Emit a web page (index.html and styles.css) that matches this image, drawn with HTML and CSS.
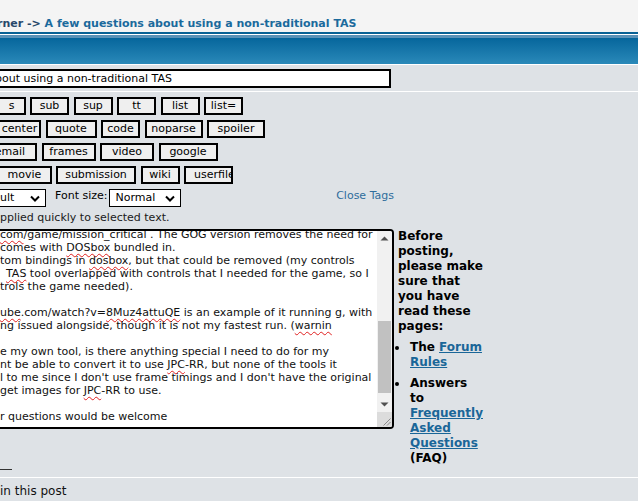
FILE: index.html
```html
<!DOCTYPE html>
<html lang="en">
<head>
<meta charset="utf-8">
<title>Post reply</title>
<link rel="stylesheet" href="styles.css">
</head>
<body>
<div class="crumbs"><span class="crumb-prev">rner -&gt;</span> <a class="crumb-link">A few questions about using a non-traditional TAS</a></div>
<div class="bar-line"></div>
<div class="catbar"></div>

<div class="row subject-row">
  <div class="subject">bout using a non-traditional TAS</div>
</div>

<div class="row editor-row">
  <div class="editor">
    <div class="tagrow">
      <span class="btn w28 first-s">s</span>
      <span class="btn w39">sub</span>
      <span class="btn w39">sup</span>
      <span class="btn w39">tt</span>
      <span class="btn w39">list</span>
      <span class="btn w39">list=</span>
    </div>
    <div class="tagrow">
      <span class="btn w43 first-center">center</span>
      <span class="btn w51">quote</span>
      <span class="btn w39">code</span>
      <span class="btn w58">noparse</span>
      <span class="btn w58">spoiler</span>
    </div>
    <div class="tagrow">
      <span class="btn w54 first-email">email</span>
      <span class="btn w54">frames</span>
      <span class="btn w54">video</span>
      <span class="btn w59">google</span>
    </div>
    <div class="tagrow">
      <span class="btn w54 first-movie">movie</span>
      <span class="btn w80">submission</span>
      <span class="btn w39">wiki</span>
      <span class="btn w49 btn-overflow">userfile</span>
    </div>

    <div class="fontrow">
      <div class="select sel-font"><span>ult</span><svg width="10" height="7" viewBox="0 0 10 7"><path d="M1 1.5 L5 5.5 L9 1.5" fill="none" stroke="#000" stroke-width="2"/></svg></div>
      <span class="label">Font size:</span>
      <div class="select sel-size"><span>Normal</span><svg width="10" height="7" viewBox="0 0 10 7"><path d="M1 1.5 L5 5.5 L9 1.5" fill="none" stroke="#000" stroke-width="2"/></svg></div>
      <a class="close-tags">Close Tags</a>
    </div>
    <div class="hint">pplied quickly to selected text.</div>

    <div class="post-area">
      <div class="textarea">
        <div class="ta-text">
          <div class="ta-lines">
            <div><span class="sp">com</span>/game/mission_critical . The GOG version removes the need for</div>
            <div>comes with <span class="sp">DOSbox</span> bundled in.</div>
            <div>tom bindings in <span class="sp">dosbox</span>, but that could be removed (my controls</div>
            <div class="ind"><span class="sp">TAS</span> tool overlapped with controls that I needed for the game, so I</div>
            <div>trols the game needed).</div>
            <div>&nbsp;</div>
            <div><span class="sp">ube</span>.com/watch?v=<span class="sp">8Muz4attuQE</span> is an example of it running g, with</div>
            <div>ng issued alongside, though it is not my fastest run. (<span class="sp">warnin</span></div>
            <div>&nbsp;</div>
            <div>e my own tool, is there anything special I need to do for my</div>
            <div>nt be able to convert it to use <span class="sp">JPC</span>-RR, but none of the tools it</div>
            <div>l to me since I don't use frame timings and I don't have the original</div>
            <div>get images for <span class="sp">JPC</span>-RR to use.</div>
            <div>&nbsp;</div>
            <div>r questions would be welcome</div>
          </div>
        </div>
        <div class="scrollbar">
          <div class="sb-btn"><svg width="15" height="15" viewBox="0 0 15 15"><path d="M3.5 9.5 L7.5 5.5 L11.5 9.5 Z" fill="#505050"/></svg></div>
          <div class="sb-track"><div class="sb-thumb"></div></div>
          <div class="sb-btn"><svg width="15" height="15" viewBox="0 0 15 15"><path d="M3.5 5.5 L7.5 9.5 L11.5 5.5 Z" fill="#505050"/></svg></div>
          <div class="sb-corner"><svg width="15" height="15" viewBox="0 0 15 15"><path d="M13.5 6.5 L6.5 13.5 M13.5 10 L10 13.5" stroke="#8a8a8a" stroke-width="1" fill="none"/></svg></div>
        </div>
      </div>
      <div class="sidebar">
        <div class="sb-intro">Before posting, please make sure that you have read these pages:</div>
        <ul class="pages">
          <li>The <a class="side-link">Forum Rules</a></li>
          <li>Answers to <a class="side-link">Frequently Asked Questions</a> (FAQ)</li>
        </ul>
      </div>
    </div>
    <div class="dash"></div>
  </div>
</div>

<div class="row footer-row">in this post</div>
</body>
</html>
```

FILE: styles.css
```css
html, body {
  margin: 0;
  padding: 0;
}
body {
  background: #dee2e6;
  font-family: "DejaVu Sans", Verdana, sans-serif;
  font-size: 11px;
  color: #000;
  overflow: hidden;
}

.crumbs {
  height: 32px;
  box-sizing: border-box;
  padding-top: 17px;
  margin-left: -3px;
  line-height: 13px;
  font-weight: bold;
  font-size: 11px;
  white-space: nowrap;
  background: #f4f4f4;
}
.crumb-prev { color: #27476a; }
.crumb-link { color: #1b6a9c; text-decoration: none; }

.bar-line {
  height: 1px;
  border-top: 2px solid #0a6295;
  background: #fff;
}
.catbar {
  height: 26px;
  border-top: 3px solid #5a92b8;
  background: linear-gradient(#06669c, #2a89b9);
}

.row { border-top: 1px solid #fff; }

.subject-row {
  height: 27px;
  box-sizing: border-box;
  padding-top: 4px;
}
.subject {
  width: 391px;
  height: 19px;
  box-sizing: border-box;
  border: 2px solid #000;
  border-left: none;
  background: #fff;
  line-height: 15px;
  text-indent: -5px;
  white-space: nowrap;
  overflow: hidden;
}

.editor-row { height: 386px; box-sizing: border-box; }
.editor {
  padding-top: 5px;
  padding-bottom: 7px;
}

.tagrow {
  display: flex;
  gap: 4.5px;
  height: 18px;
  margin-bottom: 5px;
}
.btn {
  flex: none;
  display: flex;
  align-items: center;
  justify-content: center;
  height: 18px;
  box-sizing: border-box;
  border: 2px solid #000;
  background: #efefef;
  line-height: 14px;
  white-space: nowrap;
  overflow: hidden;
}
.btn-overflow { justify-content: flex-start; padding-left: 8px; }
.w28 { width: 28px; }
.w39 { width: 39px; }
.w43 { width: 43px; }
.w49 { width: 49px; }
.w51 { width: 51px; }
.w54 { width: 54px; }
.w58 { width: 58px; }
.w59 { width: 59px; }
.w80 { width: 80px; }
.first-s { margin-left: -2.5px; }
.first-center { margin-left: -2px; }
.first-email { margin-left: -17px; }
.first-movie { margin-left: -2.5px; }

.fontrow {
  display: flex;
  align-items: flex-start;
  width: 394px;
  margin-top: 2px;
  height: 18px;
}
.select {
  display: flex;
  align-items: center;
  justify-content: space-between;
  height: 18px;
  box-sizing: border-box;
  border: 1px solid #000;
  background: #fff;
  line-height: 16px;
  padding-right: 5px;
}
.sel-font { width: 46px; border-left: none; }
.sel-size { width: 72px; padding-left: 5px; margin-left: 2px; }
.label { margin-left: 9px; line-height: 13px; }
.close-tags {
  margin-left: auto;
  line-height: 13px;
  color: #2f6d9c;
  text-decoration: none;
}

.hint {
  margin-top: 4px;
  line-height: 13px;
  color: #1a1a1a;
  white-space: nowrap;
}

.post-area {
  display: flex;
  align-items: flex-start;
  margin-top: 5px;
}
.textarea {
  flex: none;
  display: flex;
  width: 394px;
  height: 200px;
  box-sizing: border-box;
  border: 2px solid #000;
  border-left: none;
  border-radius: 0 4px 4px 0;
  background: #fff;
  overflow: hidden;
}
.ta-text {
  flex: 1;
  overflow: hidden;
}
.ta-lines {
  margin-top: -3px;
  line-height: 13px;
  color: #111;
  white-space: nowrap;
}
.ind { padding-left: 6px; }
.sp {
  text-decoration: underline wavy #e02020;
  text-decoration-thickness: 1px;
  text-underline-offset: 2px;
  text-decoration-skip-ink: none;
}

.scrollbar {
  flex: none;
  width: 15px;
  display: flex;
  flex-direction: column;
  background: #f1f1f1;
}
.sb-btn { height: 15px; }
.sb-btn svg, .sb-corner svg { display: block; }
.sb-track {
  flex: 1;
  display: flex;
  flex-direction: column;
  justify-content: flex-end;
}
.sb-thumb {
  height: 72px;
  margin: 0 1px 4px;
  background: #c1c1c1;
}
.sb-corner { height: 15px; background: #dcdcdc; }

.sidebar {
  width: 86px;
  margin-left: 4px;
  font-size: 12px;
  font-weight: bold;
  line-height: 15px;
  color: #000;
}
.pages {
  list-style: none;
  margin: 6px 0 0;
  padding: 0;
}
.pages li {
  position: relative;
  padding-left: 12px;
}
.pages li + li { margin-top: 6px; }
.pages li::before {
  content: "";
  position: absolute;
  left: -3px;
  top: 6px;
  width: 4px;
  height: 4px;
  border-radius: 50%;
  background: #000;
}
.side-link { color: #1a6698; text-decoration: underline; }

.dash {
  width: 12px;
  height: 1px;
  margin-top: 3px;
  background: #333;
}

.footer-row {
  padding-top: 6px;
  font-size: 12px;
  line-height: 14px;
  color: #111;
}
```
